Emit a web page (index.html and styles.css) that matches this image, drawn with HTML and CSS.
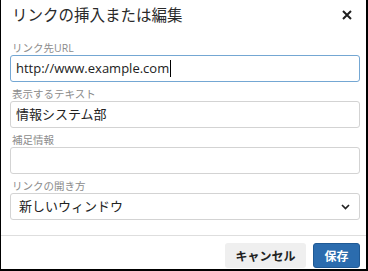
FILE: index.html
```html
<!DOCTYPE html>
<html lang="ja">
<head>
<meta charset="utf-8">
<link rel="stylesheet" href="styles.css">
</head>
<body>
<div class="dialog">
  <div class="header">
    <div class="title">リンクの挿入または編集</div>
    <svg class="close" width="10" height="10" viewBox="0 0 10 10"><path d="M1 1 L9 9 M9 1 L1 9" stroke="#1f1f1f" stroke-width="2" fill="none"/></svg>
  </div>
  <div class="body">
    <div class="field">
      <div class="label">リンク先URL</div>
      <div class="input focus">http://www.example.com<span class="caret"></span></div>
    </div>
    <div class="field">
      <div class="label">表示するテキスト</div>
      <div class="input">情報システム部</div>
    </div>
    <div class="field">
      <div class="label">補足情報</div>
      <div class="input"></div>
    </div>
    <div class="field">
      <div class="label">リンクの開き方</div>
      <div class="input select"><span>新しいウィンドウ</span>
        <svg class="chev" width="9" height="6" viewBox="0 0 9 6"><path d="M1 1 L4.5 4.5 L8 1" stroke="#222" stroke-width="1.7" fill="none"/></svg>
      </div>
    </div>
  </div>
  <div class="footer">
    <div class="btn cancel">キャンセル</div>
    <div class="btn save">保存</div>
  </div>
</div>
</body>
</html>
```
FILE: styles.css
```css
html, body {
  margin: 0;
  padding: 0;
  background: #fff;
}
.dialog {
  width: 368px;
  height: 271px;
  box-sizing: border-box;
  border-left: 1px solid #000;
  border-right: 2px solid #000;
  border-bottom: 2px solid #000;
  background: #fff;
  display: flex;
  flex-direction: column;
  font-family: "Open Sans", "Noto Sans CJK JP", sans-serif;
  color: #222;
}
.header {
  height: 30px;
  display: flex;
  align-items: center;
  justify-content: space-between;
  padding: 0 14px 0 11px;
}
.title {
  font-size: 15.5px;
  color: #2a2a2a;
  line-height: 30px;
}
.close {
  display: block;
}
.body {
  padding: 11px 6px 0 9px;
}
.field {
  margin-bottom: 5px;
}
.label {
  font-size: 10.5px;
  line-height: 14px;
  color: #8c8c8c;
  padding-left: 2px;
}
.input {
  height: 27px;
  box-sizing: border-box;
  border: 1px solid #d3d3d3;
  border-radius: 3px;
  padding: 0 5px;
  font-size: 13px;
  line-height: 25px;
  color: #222;
  display: flex;
  align-items: center;
}
.input.focus {
  border-color: #74a7d3;
}
.caret {
  display: inline-block;
  width: 1px;
  height: 17px;
  background: #000;
  margin-left: 1px;
}
.select {
  justify-content: space-between;
  padding: 0 9px 0 8px;
}
.chev {
  display: block;
}
.footer {
  margin-top: auto;
  border-top: 1px solid #dedede;
  padding: 7px 6px 1px;
  display: flex;
  justify-content: flex-end;
  gap: 7px;
}
.btn {
  height: 25px;
  box-sizing: border-box;
  border-radius: 3px;
  font-size: 12px;
  font-weight: bold;
  display: flex;
  align-items: center;
  justify-content: center;
}
.cancel {
  width: 81px;
  background: #efefef;
  color: #222;
}
.save {
  width: 47px;
  background: #2b6cae;
  border: 1px solid #1f5994;
  color: #fff;
}
```
